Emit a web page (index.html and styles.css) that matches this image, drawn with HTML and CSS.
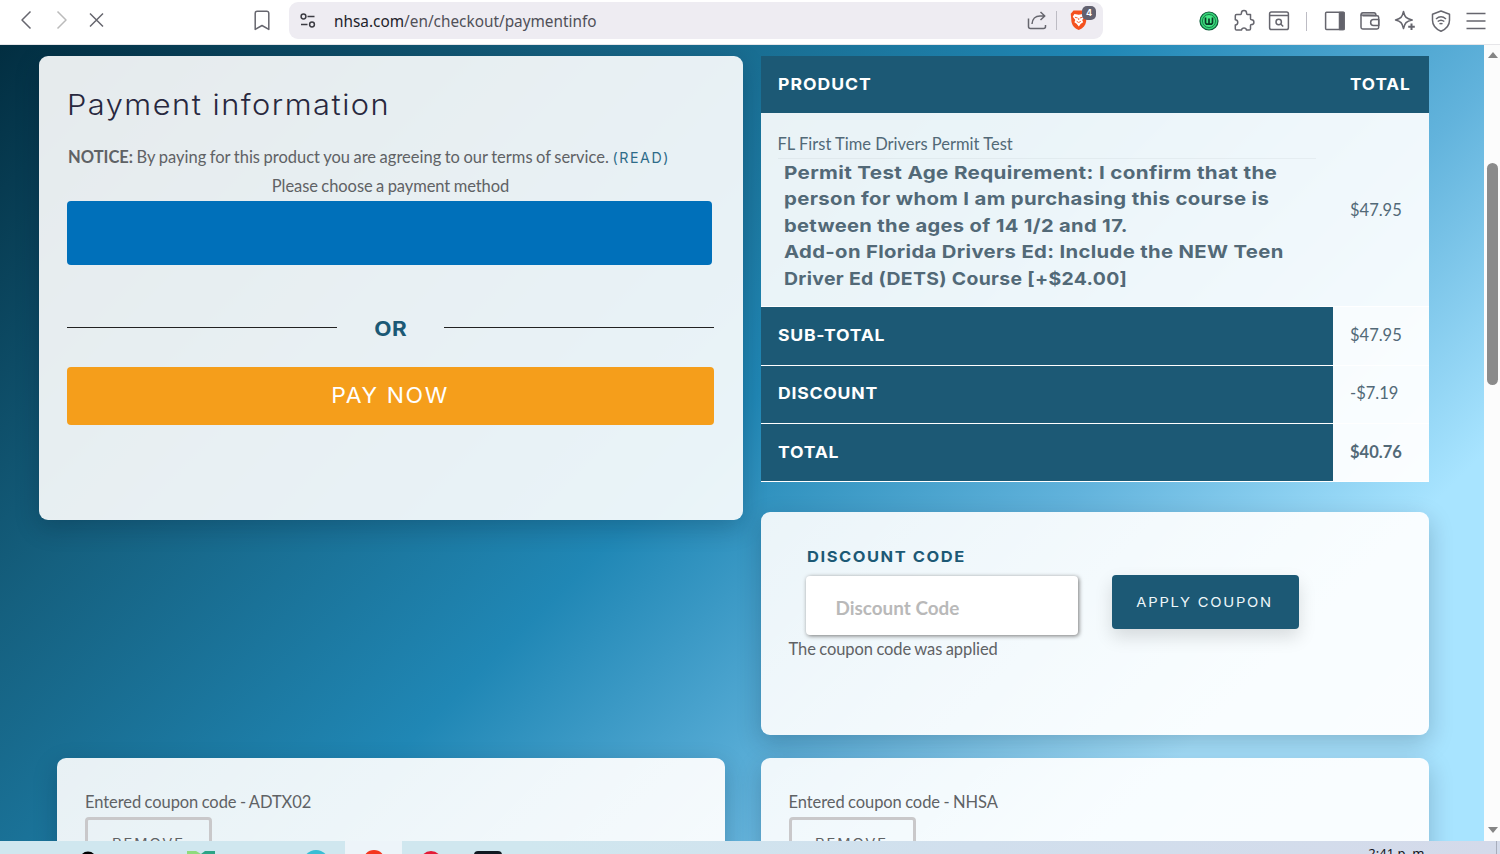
FILE: index.html
```html
<!DOCTYPE html>
<html lang="en">
<head>
<meta charset="utf-8">
<title>Payment information</title>
<link rel="stylesheet" href="styles.css">
</head>
<body>
<header class="toolbar">
  <div class="nav">
    <svg class="ic" viewBox="0 0 24 24"><path d="M15.5 3.500L7 12l8.500 8.500"/></svg>
    <svg class="ic faded" viewBox="0 0 24 24"><path d="M7.500 3.500L16 12l-8.500 8.500"/></svg>
    <svg class="ic" viewBox="0 0 24 24"><path d="M5 5.500l13 13M18 5.500l-13 13"/></svg>
  </div>
  <svg class="ic bookmark" viewBox="0 0 24 24"><path d="M7.200 3.200h9.600a2 2 0 0 1 2 2v16.200L12 17.500l-6.800 3.900V5.200a2 2 0 0 1 2-2z"/></svg>
  <div class="address">
    <svg class="ic dark" viewBox="0 0 24 24"><circle cx="7.500" cy="7.500" r="2.400"/><path d="M11.500 7.500h7M5 15.500h6.500"/><circle cx="16" cy="15.500" r="2.400"/></svg>
    <span class="url">nhsa.com<span class="path">/en/checkout/paymentinfo</span></span>
    <svg class="ic share" viewBox="0 0 24 24"><path d="M3.500 9.500v8a2 2 0 0 0 2 2h13a2 2 0 0 0 2-2v-1.500M7 15c.3-5 3.500-8 8-8h4.500M15.500 3l4.300 4-4.300 4"/></svg>
    <i class="sep"></i>
    <div class="shield">
      <svg viewBox="0 0 20 24"><path fill="#f4511e" d="M4 1.500h11.500l3 3.800-.8 8.500c-.5 4-3 6.700-8 9.200-5-2.500-7.200-5.200-7.900-9.200L1 5.300z"/><path fill="#fff" d="M5 5.500l4.700.8 4.600-.8 2 3-2.800 3.500 1 2.500-2.500 1.500-2.200 3-2.400-3L5 14.500 6 12 3.200 8.500z"/><path fill="none" stroke="#f4511e" stroke-width="1" d="M5.500 9l3 .8M14 9l-3 .8M7.500 13.500l2.200 1.200 2.200-1.200M9.700 10v2"/></svg>
      <b>4</b>
    </div>
  </div>
  <div class="extensions">
    <svg class="ic" viewBox="0 0 24 24"><circle cx="12" cy="12" r="9" fill="#36d477" stroke="#0b5b38" stroke-width="1.200"/><circle cx="12" cy="12" r="6.500" fill="#45e887" stroke="#157945" stroke-width="1"/><path stroke="#083c25" stroke-width="1.700" d="M8.500 8.500v5.500l1 1.200h5l1-1.200V8.500M12 9.500V15"/></svg>
    <svg class="ic" viewBox="0 0 24 24"><path d="M4.500 5.500h4c.8 0 .9-.6.9-1.300a2.600 2.600 0 0 1 5.200 0c0 .7.100 1.300.9 1.300h3v4.300c0 .8.400 1 1 1a2.400 2.400 0 0 1 0 4.800c-.6 0-1 .2-1 1v3.200c0 .9-.5 1.300-1.300 1.300h-2.700c-.5-2.800-4.500-2.800-5 0H4.500c-.8 0-1.200-.5-1.200-1.300V16c3.300-.4 3.300-4.800 0-5.200V6.700c0-.8.500-1.200 1.200-1.200z"/></svg>
    <svg class="ic" viewBox="0 0 24 24"><rect x="2.600" y="3" width="18.800" height="17.500" rx="1.800"/><path d="M3 6.500h18"/><circle cx="11.700" cy="13" r="2.700"/><path d="M13.700 15l2.500 2.500"/></svg>
    <i class="sep"></i>
    <svg class="ic" viewBox="0 0 24 24"><rect x="2.600" y="3.200" width="18.500" height="17.300" rx="1"/><path fill="#62626b" d="M16.500 3.500H21v17h-4.500z"/></svg>
    <svg class="ic" viewBox="0 0 24 24"><path fill="#d0d0d2" d="M3 6c0-1.500 1-2.300 2-2.300h11c1 0 2 .8 2 2.800z"/><path d="M3 5.800v12.500c0 1 .7 1.700 1.700 1.700H19c1 0 1.700-.7 1.700-1.700V8.500c0-1-.7-1.700-1.700-1.700H4.500M21 10.500h-5.500c-3.800 0-3.800 6 0 6H21z"/></svg>
    <svg class="ic" viewBox="0 0 24 24"><path d="M10.500 2.500c1.200 5.600 2.800 7.200 8.700 8.500-5.900 1.300-7.500 2.900-8.700 8.500C9.300 13.900 7.700 12.300 2.500 11c5.200-1.300 6.800-2.900 8-8.500z"/><path stroke-width="2" d="M18.500 14.500v6.500M15.200 17.800h6.600"/></svg>
    <svg class="ic" viewBox="0 0 24 24"><path d="M12 2l8.500 3.200v6c0 5.500-3.500 8.800-8.500 11.100-5-2.300-8.500-5.600-8.500-11.100v-6z"/><path d="M7 10c3-2.600 7-2.600 10 0M8.700 12.500c2-1.600 4.600-1.600 6.600 0M10.500 15c1-.8 2-.8 3 0"/></svg>
    <svg class="ic" viewBox="0 0 24 24"><path d="M2.500 4.500h19M2.500 12h19M2.500 19.500h19"/></svg>
  </div>
</header>
<div class="viewport">
  <main class="page">
    <section class="checkout">
      <div class="card payment">
        <h1><span class="wide title">Payment information</span></h1>
        <p class="notice"><strong>NOTICE:</strong> By paying for this product you are agreeing to our terms of service. <a class="read">(READ)</a></p>
        <p class="choose">Please choose a payment method</p>
        <div class="paypal"></div>
        <div class="or"><hr><span>OR</span><hr></div>
        <div class="pay"><span>PAY NOW</span></div>
      </div>
      <div class="summary">
        <div class="table">
          <div class="head"><span class="wide">PRODUCT</span><span class="cell"><span class="wide total">TOTAL</span></span></div>
          <div class="item">
            <div class="desc">
              <p>FL First Time Drivers Permit Test</p>
              <div class="options">
                <span class="wide l1">Permit Test Age Requirement: I confirm that the</span>
                <span class="wide l2">person for whom I am purchasing this course is</span>
                <span class="wide l3">between the ages of 14 1/2 and 17.</span>
                <span class="wide l4">Add-on Florida Drivers Ed: Include the NEW Teen</span>
                <span class="wide l5">Driver Ed (DETS) Course [+$24.00]</span>
              </div>
            </div>
            <span class="cell">$47.95</span>
          </div>
          <div class="row"><span class="label"><span class="wide">SUB-TOTAL</span></span><span class="cell">$47.95</span></div>
          <div class="row"><span class="label"><span class="wide">DISCOUNT</span></span><span class="cell">-$7.19</span></div>
          <div class="row"><span class="label"><span class="wide">TOTAL</span></span><span class="cell bold">$40.76</span></div>
        </div>
        <div class="card coupon">
          <div class="form">
            <div class="field"><label><span class="wide code-label">DISCOUNT CODE</span></label><div class="input">Discount Code</div></div>
            <div class="apply"><span>APPLY COUPON</span></div>
          </div>
          <p>The coupon code was applied</p>
        </div>
      </div>
    </section>
    <section class="codes">
      <div class="card code"><p>Entered coupon code - ADTX02</p><div class="remove"><span>REMOVE</span></div></div>
      <div class="card code"><p>Entered coupon code - NHSA</p><div class="remove"><span>REMOVE</span></div></div>
    </section>
  </main>
  <aside class="scroll"><i class="up"></i><i class="thumb"></i><i class="down"></i></aside>
</div>
<footer class="taskbar">
  <svg class="apps" viewBox="0 0 520 13"><path fill="#edf4f9" d="M345 0h57v13h-57z"/><circle cx="88" cy="19" r="8.500"/><path fill="#8edb7d" d="M187 10h9l5 3h-14z"/><path fill="#2ca486" d="M201 13l4-3h10v3z"/><circle cx="316" cy="22" r="13" fill="#39bed5"/><circle cx="374" cy="20" r="11" fill="#f4371f"/><circle cx="431" cy="21" r="11" fill="#e31b36"/><rect x="474" y="10" width="28" height="20" rx="4" fill="#101921"/></svg>
  <span class="clock">2:41 p. m.</span><i class="edge"></i>
</footer>
</body>
</html>
```

FILE: styles.css
```css
* { box-sizing: border-box; }
body { margin: 0; width: 1500px; height: 854px; overflow: hidden; display: flex; flex-direction: column; font: 16.500px/24px Lato, sans-serif; color: #5f6265; background: #fff; }
h1, p { margin: 0; font-weight: 400; }
span, a { white-space: nowrap; }

.toolbar { height: 45px; flex: none; display: flex; padding: 2px 12px 0 15px; background: #fff; border-bottom: 1px solid #e6e6e9; }
.ic { width: 24px; height: 24px; flex: none; fill: none; stroke: #66666e; stroke-width: 1.500; stroke-linejoin: round; }
.faded { stroke: #bbb; }
.dark { stroke: #3c3c43; }
.nav { display: flex; gap: 11px; padding-top: 6px; width: 235px; }
.bookmark { margin-top: 6px; }
.address { width: 814px; height: 37px; margin-left: 15px; padding-left: 7px; border-radius: 9px; background: #eeecf2; display: flex; align-items: center; }
.url { font: 15.350px "Noto Sans", sans-serif; color: #22222a; margin-left: 14px; width: 691px; }
.path { color: #505058; }
.sep { width: 1px; height: 19px; background: #bdbcc4; flex: none; }
.share { margin-right: 7px; }
.shield { position: relative; margin-left: 12px; width: 20px; height: 24px; }
.shield svg { display: block; width: 20px; height: 22px; }
.shield b { position: absolute; left: 13px; top: -3px; width: 14px; height: 14px; border-radius: 5px; background: #62616f; color: #fff; font: bold 9px/14px Inter, sans-serif; text-align: center; }
.extensions { display: flex; gap: 11.300px; margin-left: 93.500px; padding-top: 6.500px; }
.extensions .sep { margin: 3px 4px 0; }

.viewport { flex: none; height: 796px; display: flex; overflow: hidden; }
.page { width: 1484px; padding: 11px 0 0 39px; overflow: hidden; background: linear-gradient(135deg, #022e41 0%, #15607f 25%, #2087b5 48.500%, #62b3dc 67%, #a8e4ff 83%); }
.checkout { display: flex; gap: 17.500px; height: 702px; }
.card { border-radius: 9px; background: linear-gradient(135deg, #ffffffe6, #fffffff0); box-shadow: 0 8px 24px rgba(0, 20, 35, .22); }
.card p { letter-spacing: -.07px; word-spacing: -.7px; }
.payment { width: 704px; height: 464px; padding: 32px 29px 0 28px; background: #ffffffe6; }
h1 { height: 35px; }
.title { font: 300 28px/35px Inter, sans-serif; letter-spacing: 1.350px; color: #28283e; }
.wide { display: inline-block; transform-origin: left; transform: scaleX(1.100); }
.card .notice { margin-top: 22px; height: 26px; padding-left: 1px; white-space: nowrap; letter-spacing: 0; }
.read { font: 14.200px Inter, sans-serif; letter-spacing: 1.600px; color: #2d6c89; }
.choose { margin-top: 3px; height: 27px; text-align: center; }
.paypal { width: 645px; height: 64px; border-radius: 4px; background: #0070ba; }
.or { display: flex; align-items: center; justify-content: space-between; height: 102px; padding-top: 22px; }
.or hr { width: 270px; height: 0; border: 0; border-top: 1px solid #222; margin: 0; }
.or span { font: 700 20px Inter, sans-serif; color: #1b5975; letter-spacing: .5px; padding-top: 3px; transform: scaleX(1.120); }
.pay { height: 58px; border-radius: 4px; background: #f59e1b; color: #fff; text-align: center; font: 400 21px/58px Inter, sans-serif; letter-spacing: 1.500px; }
.pay span, .apply span, .remove span { display: inline-block; transform: scaleX(1.090); }

.summary { width: 668.500px; }
.table { height: 426px; }
.cell { width: 96px; padding-left: 17px; flex: none; color: #526977; }
.bold { font-weight: 700; }
.head { height: 57px; padding: 0 0 2px 17px; display: flex; align-items: center; justify-content: space-between; background: #1c5975; color: #fff; font: 700 16px Inter, sans-serif; letter-spacing: .9px; }
.head .cell { color: #fff; }
.head .total { transform: scaleX(1.070); }
.item { height: 193px; display: flex; align-items: center; background: #ffffffe8; color: #526977; }
.desc { width: 572.500px; padding: 5px 17px 0; }
.desc p { height: 27px; border-bottom: 1px solid #0000000a; }
.options { display: flex; flex-direction: column; align-items: flex-start; padding: 1px 0 0 6px; font: 700 18px/26.400px Inter, sans-serif; letter-spacing: .3px; }
.l1 { transform: scaleX(1.146); }
.l2 { transform: scaleX(1.132); }
.l3 { transform: scaleX(1.119); }
.l4 { transform: scaleX(1.127); }
.l5 { transform: scaleX(1.078); }
.row { height: 58.500px; display: flex; align-items: center; background: #fffffff2; border-top: 1px solid #fff; }
.row .cell { padding-bottom: 2px; }
.row:last-child { height: 59px; border-bottom: 1px solid #fff; }
.label { width: 572.500px; align-self: stretch; display: flex; align-items: center; padding: 0 0 2px 17px; background: #1c5975; color: #fff; font: 700 16px Inter, sans-serif; letter-spacing: .7px; }
.coupon { margin-top: 30px; height: 223px; padding: 32px 28px; }
.form { display: flex; gap: 34px; padding-left: 17px; height: 92px; }
.field label { display: block; height: 32px; padding-left: 1px; color: #1c5975; }
.code-label { font: 700 15px/23px Inter, sans-serif; letter-spacing: 1.400px; }
.input { width: 272px; height: 59px; border-radius: 4px; padding: 2px 30px 0; line-height: 59px; font-size: 18.900px; font-weight: 700; color: #b9b9b9; background: #fff; box-shadow: 1px 1px 4px #777; }
.apply { width: 187px; height: 54px; margin-top: 31px; border-radius: 4px; background: #1c5975; color: #edf6fa; text-align: center; font: 400 13.500px/54px Inter, sans-serif; letter-spacing: 1.600px; box-shadow: 0 8px 18px #0002; }
.coupon p { margin-top: 1px; }
.codes { display: flex; gap: 35.500px; padding-left: 18px; }
.code { width: 668px; height: 140px; padding: 32px 28px; }
.remove { width: 127px; height: 54px; margin-top: 3px; border: 3px solid #c9c8ca; border-radius: 4px; text-align: center; font: 13.500px/47px Inter, sans-serif; letter-spacing: 1.800px; color: #5f6265; }

.scroll { width: 16px; background: #fcfcfc; display: flex; flex-direction: column; align-items: center; padding: 7px 0 8px 1px; }
.up { border: 5px solid transparent; border-top: 0; border-bottom: 6px solid #858585; }
.thumb { width: 11px; height: 222px; margin-top: 105px; border-radius: 6px; background: #8b8b8b; }
.down { margin-top: auto; border: 5px solid transparent; border-bottom: 0; border-top: 6px solid #858585; }
.taskbar { height: 13px; overflow: hidden; display: flex; justify-content: space-between; background: linear-gradient(90deg, #d0e7ef 0 35%, #d1dfed 65%, #d4daea); }
.apps { width: 520px; height: 13px; flex: none; }
.clock { margin-left: auto; margin-right: 68px; color: #15151a; font: 13px/25px "Noto Sans", sans-serif; }
.edge { width: 1px; margin-right: 3px; background: #a8adbb; }
```
